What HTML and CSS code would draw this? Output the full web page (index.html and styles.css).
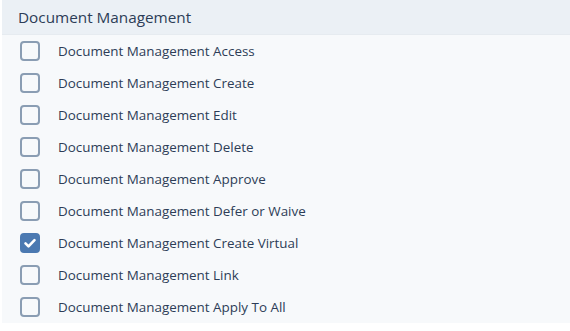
FILE: index.html
```html
<!DOCTYPE html>
<html lang="en">
<head>
    <meta charset="UTF-8">
    <title>Permissions</title>
    <link rel="stylesheet" href="styles.css">
</head>
<body>
    <div class="perm-group">
        <div class="perm-header">Document Management</div>
        <ul class="perm-list">
            <li class="perm-row"><span class="check"></span>Document Management Access</li>
            <li class="perm-row"><span class="check"></span>Document Management Create</li>
            <li class="perm-row"><span class="check"></span>Document Management Edit</li>
            <li class="perm-row"><span class="check"></span>Document Management Delete</li>
            <li class="perm-row"><span class="check"></span>Document Management Approve</li>
            <li class="perm-row"><span class="check"></span>Document Management Defer or Waive</li>
            <li class="perm-row"><span class="check checked"><svg viewBox="0 0 20 20" width="20" height="20"><path d="M5.5 10.3l3 3 6-6.2" fill="none" stroke="#fff" stroke-width="2.6" stroke-linecap="round" stroke-linejoin="round"/></svg></span>Document Management Create Virtual</li>
            <li class="perm-row"><span class="check"></span>Document Management Link</li>
            <li class="perm-row"><span class="check"></span>Document Management Apply To All</li>
        </ul>
    </div>
</body>
</html>
```

FILE: styles.css
```css
* {
    margin: 0;
    padding: 0;
    box-sizing: border-box;
}

body {
    font-family: "Open Sans", Lato, sans-serif;
    background: #fff;
    color: #2d3d57;
}

.perm-group {
    margin-left: 2px;
    background: #f7f9fb;
}

.perm-header {
    height: 35px;
    display: flex;
    align-items: center;
    padding-left: 16px;
    background: #ebf0f5;
    font-size: 15.3px;
    border-bottom: 1px solid #e6ebf0;
}

.perm-list {
    list-style: none;
}

.perm-row {
    height: 32px;
    display: flex;
    align-items: center;
    padding-left: 18px;
    font-size: 13.4px;
}

.check {
    width: 20px;
    height: 20px;
    border: 2px solid #8a9db3;
    border-radius: 4px;
    margin-right: 18px;
    flex-shrink: 0;
    display: flex;
    align-items: center;
    justify-content: center;
}

.check.checked {
    background: #4b79b1;
    border-color: #4b79b1;
}

.check svg {
    flex-shrink: 0;
}
```
